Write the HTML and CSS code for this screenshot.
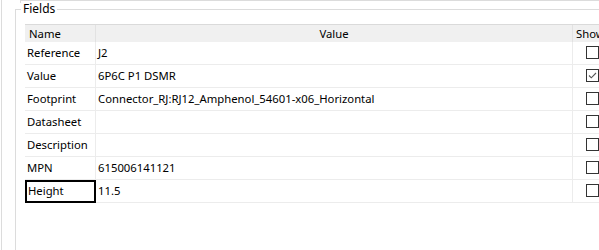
FILE: index.html
```html
<!DOCTYPE html>
<html lang="en">
    <head>
        <meta charset="UTF-8" />
        <title>Symbol Properties</title>
        <link rel="stylesheet" href="styles.css">
    </head>
    <body>
        <div class="panel">
            <div class="tab-edge"></div>
            <fieldset class="group">
                <legend>Fields</legend>
                <div class="grid">
                    <div class="head">Name</div>
                    <div class="head center">Value</div>
                    <div class="head show">Show</div>

                    <div class="cell">Reference</div>
                    <div class="cell">J2</div>
                    <div class="cell"><span class="check"></span></div>

                    <div class="cell">Value</div>
                    <div class="cell">6P6C P1 DSMR</div>
                    <div class="cell">
                        <span class="check">
                            <svg width="11" height="11" viewBox="0 0 11 11"><path d="M2 5.5 L4.3 7.8 L9 3" fill="none" stroke="#555" stroke-width="1.1"/></svg>
                        </span>
                    </div>

                    <div class="cell">Footprint</div>
                    <div class="cell">Connector_RJ:RJ12_Amphenol_54601-x06_Horizontal</div>
                    <div class="cell"><span class="check"></span></div>

                    <div class="cell">Datasheet</div>
                    <div class="cell"></div>
                    <div class="cell"><span class="check"></span></div>

                    <div class="cell">Description</div>
                    <div class="cell"></div>
                    <div class="cell"><span class="check"></span></div>

                    <div class="cell">MPN</div>
                    <div class="cell">615006141121</div>
                    <div class="cell"><span class="check"></span></div>

                    <div class="cell focus">Height</div>
                    <div class="cell">11.5</div>
                    <div class="cell"><span class="check"></span></div>
                </div>
            </fieldset>
        </div>
    </body>
</html>
```
FILE: styles.css
```css
body {
    margin: 0;
    background: #ffffff;
    color: #000000;
    font-family: "Noto Sans", "Open Sans", sans-serif;
    font-size: 11.3px;
    overflow: hidden;
}

.panel {
    width: 584px;
    height: 250px;
    margin-left: 1px;
    border-left: 1px solid #dcdcdc;
    padding-left: 13px;
    overflow: hidden;
}

.tab-edge {
    margin-left: 5px;
    height: 2px;
    border-top: 1px solid #dcdcdc;
    border-left: 1px solid #dcdcdc;
    margin-bottom: -2px;
}

.group {
    width: 640px;
    height: 260px;
    margin: 0;
    padding: 7px 0 0 9px;
    border: 1px solid #dcdcdc;
    border-radius: 0;
}

.group legend {
    margin-left: -4px;
    padding: 0 2px;
    height: 16px;
    line-height: 16px;
    font-size: 12px;
}

.grid {
    display: grid;
    grid-template-columns: 71px 477px 50px;
    border-top: 1px solid #dadada;
}

.head {
    height: 17px;
    line-height: 17px;
    padding-left: 4px;
    background: #f0f0f0;
    border-right: 1px solid #e2e2e2;
}

.head.center {
    text-align: center;
    padding-left: 0;
}

.head.show {
    padding-left: 3px;
}

.cell {
    height: 22px;
    line-height: 22px;
    padding-left: 2px;
    border-right: 1px solid #ececec;
    border-bottom: 1px solid #ececec;
    white-space: nowrap;
}

.cell.focus {
    outline: 2px solid #000000;
    outline-offset: -2px;
    padding-left: 3px;
}

.check {
    display: block;
    width: 11px;
    height: 11px;
    margin: 4px 0 0 11px;
    border: 1px solid #333333;
}

.check svg {
    display: block;
}
```
